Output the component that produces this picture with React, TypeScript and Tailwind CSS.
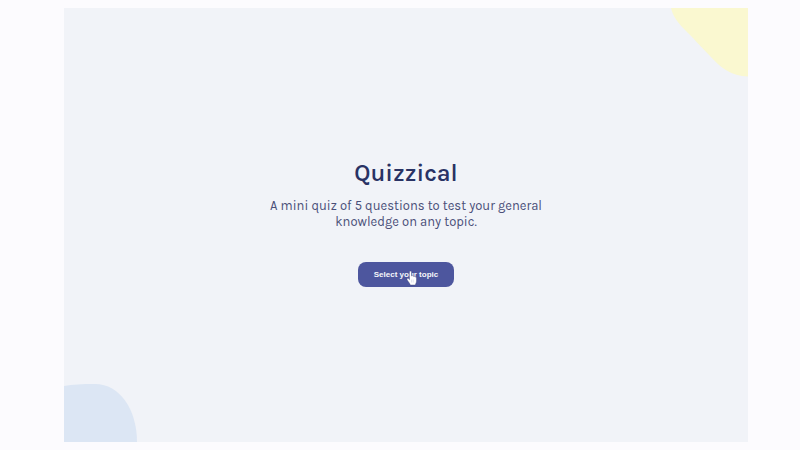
function YellowBlob() {
  return (
    <svg aria-hidden="true" className="absolute right-0 top-0 h-[69px] w-[77px]" viewBox="0 0 77 69">
      <path d="M0 0C2 9 8 16 16 24C26 34 31 40 39 48C50 60 60 68 77 68.500V0Z" fill="#faf8d0" />
    </svg>
  );
}

function BlueBlob() {
  return (
    <svg aria-hidden="true" className="absolute bottom-0 left-0 h-[58px] w-[73px]" viewBox="0 0 73 58">
      <path d="M0 2C9 .5 18 0 31 0C56 0 73 26 73 58H0Z" fill="#dce6f4" />
    </svg>
  );
}

function HandPointer() {
  return (
    <svg aria-hidden="true" className="pointer-events-none absolute left-12 top-2 h-4 w-3" viewBox="0 0 12 16">
      <path
        d="M3.500 2.200C3.500.7 5.500.7 5.500 2.200V6C6 5.300 7.200 5.500 7.300 6.400C7.900 5.900 8.900 6.200 9 7C9.800 6.700 10.500 7.200 10.500 8V11C10.500 13 9.500 13.600 9.300 15H4.300C4 13.500 2.200 11.800 1.100 9.800C.5 8.500 1.900 7.800 2.700 8.700L3.500 9.600Z"
        fill="#ffffff"
        stroke="#3f4477"
        strokeWidth=".4"
      />
      <path d="M5.500 9.500V12.500M7.200 9.500V12.500" stroke="#c4c8de" strokeWidth=".5" />
    </svg>
  );
}

export default function App() {
  return (
    <div className="flex min-h-screen bg-[#fcfbfe] pb-2 pl-16 pr-[52px] pt-2 font-['Karla',Inter,sans-serif]">
      <main className="relative flex flex-1 flex-col items-center justify-center overflow-hidden bg-[#f1f3f8] pb-1.5 text-center text-[#293264]">
        <YellowBlob />
        <BlueBlob />
        <h1 className="text-2xl font-semibold">Quizzical</h1>
        <p className="mt-[9px] max-w-[300px] text-[13px] leading-4 text-[#4a4f78]">
          A mini quiz of 5 questions to test your general knowledge on any topic.
        </p>
        <button
          type="button"
          className="relative mt-8 h-[25px] cursor-pointer rounded-lg bg-[#4d569e] px-4 font-['Liberation_Sans',Arial,sans-serif] text-[8px] font-bold text-[#f5f7fb]"
        >
          Select your topic
          <HandPointer />
        </button>
      </main>
    </div>
  );
}
